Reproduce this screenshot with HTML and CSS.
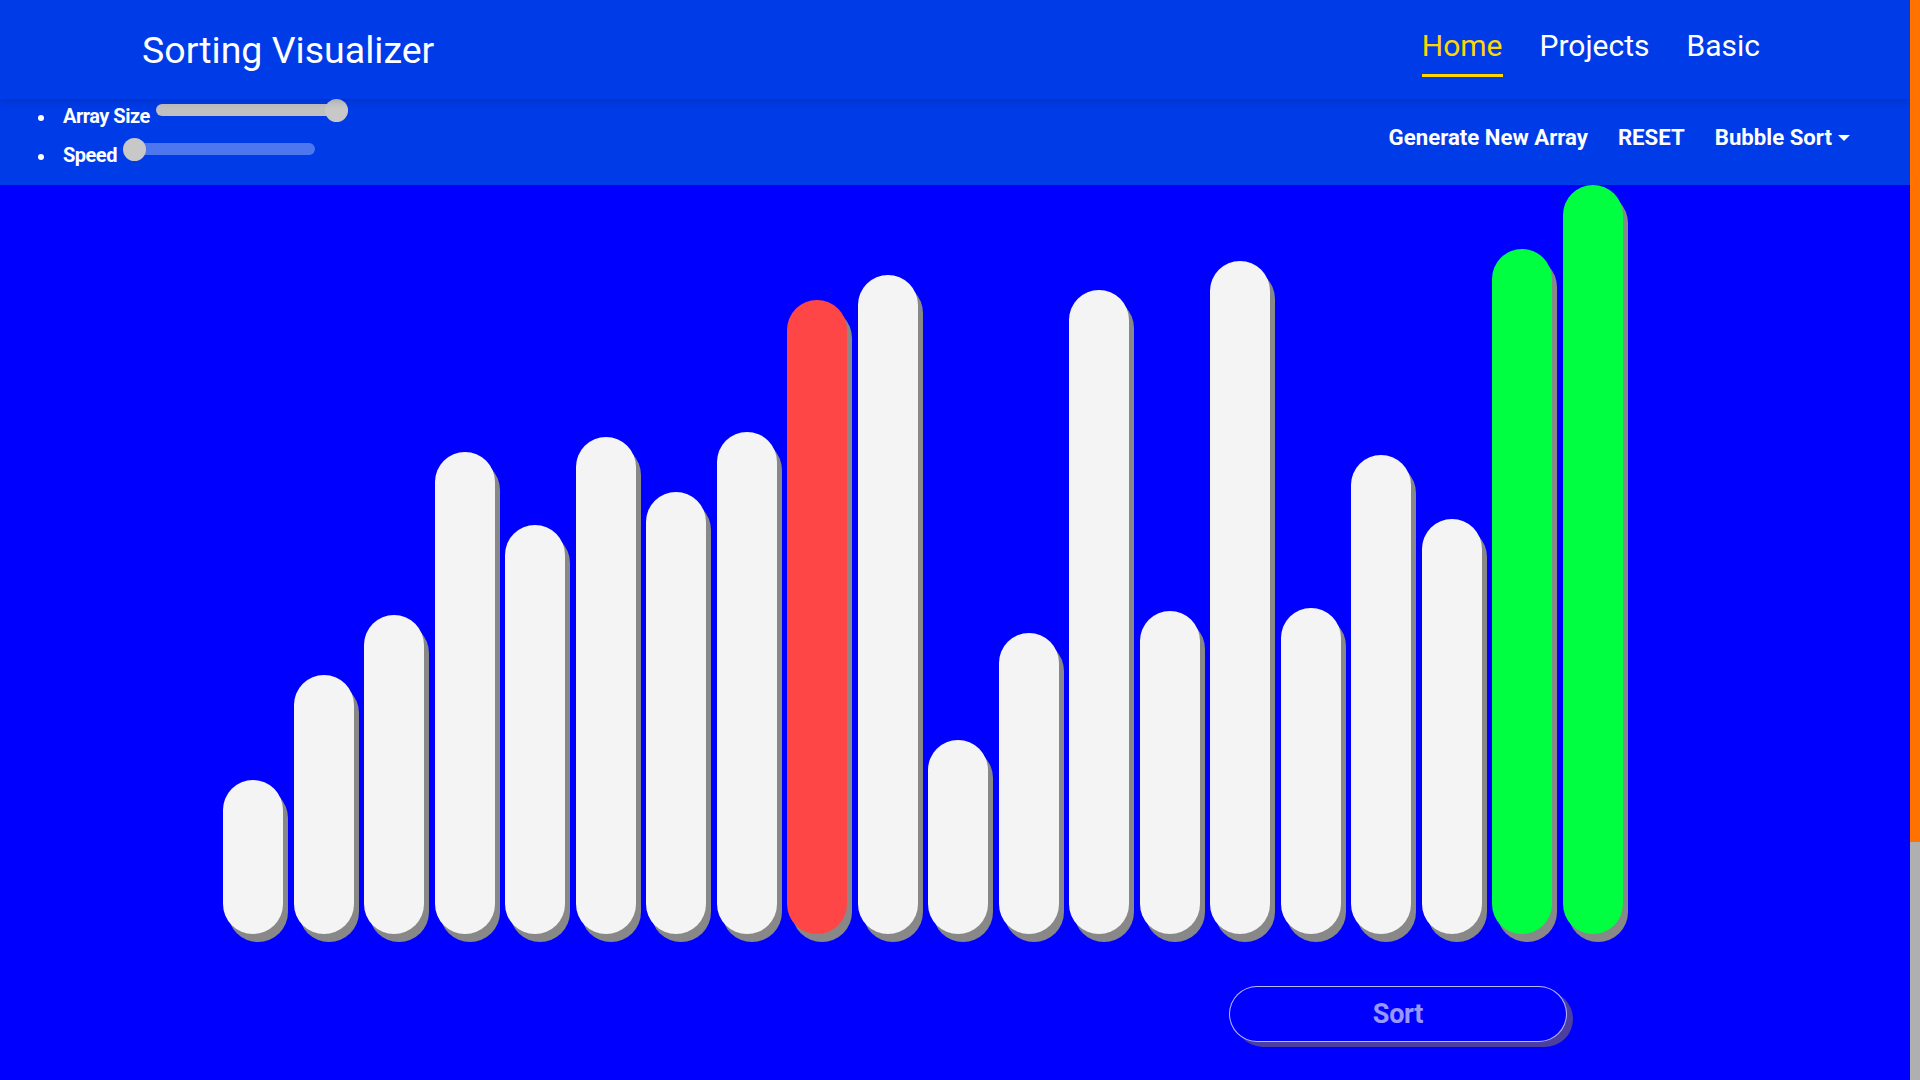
FILE: index.html
```html
<!DOCTYPE html>
<html lang="en">
<head>
<meta charset="utf-8">
<title>Sorting Visualizer</title>
<link rel="stylesheet" href="styles.css">
</head>
<body>
<div class="page">
  <header class="navbar">
    <div class="brand">Sorting Visualizer</div>
    <nav class="nav">
      <a class="nav-link active" href="#">Home</a>
      <a class="nav-link" href="#">Projects</a>
      <a class="nav-link" href="#">Basic</a>
    </nav>
  </header>
  <div class="toolbar">
    <ul class="controls">
      <li class="control"><span class="control-label">Array Size</span><input class="range" type="range" min="0" max="100" value="100" style="--fill:100%"></li>
      <li class="control"><span class="control-label">Speed</span><input class="range" type="range" min="0" max="100" value="0" style="--fill:0%"></li>
    </ul>
    <div class="actions">
      <button class="action">Generate New Array</button>
      <button class="action">RESET</button>
      <button class="action dropdown-toggle">Bubble Sort</button>
    </div>
  </div>
  <main class="stage">
    <div class="bars">
      <div class="bar" style="height:154px"></div>
      <div class="bar" style="height:259px"></div>
      <div class="bar" style="height:319px"></div>
      <div class="bar" style="height:482px"></div>
      <div class="bar" style="height:409px"></div>
      <div class="bar" style="height:497px"></div>
      <div class="bar" style="height:442px"></div>
      <div class="bar" style="height:502px"></div>
      <div class="bar bar-compare" style="height:634px"></div>
      <div class="bar" style="height:659px"></div>
      <div class="bar" style="height:194px"></div>
      <div class="bar" style="height:301px"></div>
      <div class="bar" style="height:644px"></div>
      <div class="bar" style="height:323px"></div>
      <div class="bar" style="height:673px"></div>
      <div class="bar" style="height:326px"></div>
      <div class="bar" style="height:479px"></div>
      <div class="bar" style="height:415px"></div>
      <div class="bar bar-sorted" style="height:685px"></div>
      <div class="bar bar-sorted" style="height:749px"></div>
    </div>
    <div class="sort-row">
      <button class="sort-btn">Sort</button>
    </div>
  </main>
</div>
<div class="scrollbar" aria-hidden="true">
  <div class="scrollbar-thumb"></div>
</div>
</body>
</html>
```
FILE: styles.css
```css
* {
  box-sizing: border-box;
}

body {
  margin: 0;
  height: 100vh;
  overflow: hidden;
  display: flex;
  background: #0000ff;
  font-family: "Roboto", "Liberation Sans", sans-serif;
  color: #ffffff;
}

.page {
  flex: 1;
  min-width: 0;
  height: 100vh;
  overflow: hidden;
}

.scrollbar {
  width: 10px;
  flex: none;
  height: 100vh;
  background: #afafaf;
}

.scrollbar-thumb {
  height: 842px;
  background: #ff7200;
}

.navbar {
  position: relative;
  z-index: 1;
  height: 99px;
  display: flex;
  justify-content: space-between;
  background: #003be8;
  box-shadow: 0 2px 8px rgba(0, 0, 40, 0.18);
}

.brand {
  align-self: center;
  margin: 3px 0 0 142px;
  font-size: 37.5px;
  font-weight: 400;
  line-height: 1;
}

.nav {
  display: flex;
  align-items: flex-start;
  gap: 37px;
  padding-top: 27px;
  margin-right: 150px;
}

.nav-link {
  display: block;
  font-size: 30px;
  line-height: 38px;
  padding-bottom: 9px;
  border-bottom: 3px solid transparent;
  color: #ffffff;
  text-decoration: none;
}

.nav-link.active {
  color: #ffd600;
  border-bottom-color: #ffd600;
}

.toolbar {
  height: 86px;
  display: flex;
  justify-content: space-between;
  background: #003be8;
}

.controls {
  list-style: none;
  margin: -3px 0 0;
  padding: 0 0 0 38px;
}

.control {
  height: 39px;
  display: flex;
  align-items: center;
}

.control::before {
  content: "";
  width: 6px;
  height: 6px;
  border-radius: 50%;
  background: #ffffff;
  margin: 4px 19px 0 0;
}

.control-label {
  font-size: 20px;
  font-weight: 700;
  letter-spacing: -0.5px;
}

.range {
  -webkit-appearance: none;
  appearance: none;
  width: 192px;
  height: 12px;
  margin: 0 0 11px 6px;
  border-radius: 6px;
  background: linear-gradient(to right, #c0c0c0 var(--fill), rgba(255, 255, 255, 0.3) var(--fill));
  outline: none;
}

.range::-webkit-slider-thumb {
  -webkit-appearance: none;
  appearance: none;
  width: 23px;
  height: 23px;
  border-radius: 50%;
  background: #c8c8c8;
  border: none;
}

.actions {
  display: flex;
  align-items: flex-start;
  gap: 30px;
  padding: 25px 60px 0 0;
}

.action {
  background: none;
  border: none;
  padding: 0;
  color: #ffffff;
  font-family: inherit;
  font-size: 22.2px;
  font-weight: 700;
  letter-spacing: 0;
  line-height: normal;
  cursor: pointer;
}

.dropdown-toggle::after {
  content: "";
  display: inline-block;
  margin-left: 6px;
  vertical-align: 4px;
  border-top: 6px solid #ffffff;
  border-left: 6.5px solid transparent;
  border-right: 6.5px solid transparent;
}

.bars {
  height: 749px;
  display: flex;
  align-items: flex-end;
  gap: 10.5px;
  padding-left: 223px;
}

.bar {
  width: 60px;
  flex: none;
  border-radius: 30px;
  background: #f4f4f4;
  box-shadow: 5px 8px 0 #888888;
}

.bar-compare {
  background: #ff4646;
}

.bar-sorted {
  background: #00ff40;
}

.sort-row {
  display: flex;
  padding: 52px 0 0 1229px;
}

.sort-btn {
  width: 338px;
  height: 56px;
  border-radius: 28px;
  border: 1px solid rgba(255, 255, 255, 0.72);
  background: #0000ff;
  color: rgba(255, 255, 255, 0.6);
  font-family: inherit;
  font-size: 27px;
  font-weight: 700;
  letter-spacing: -0.3px;
  box-shadow: 6px 5px 0 #4d3f9f;
  cursor: pointer;
}
```
